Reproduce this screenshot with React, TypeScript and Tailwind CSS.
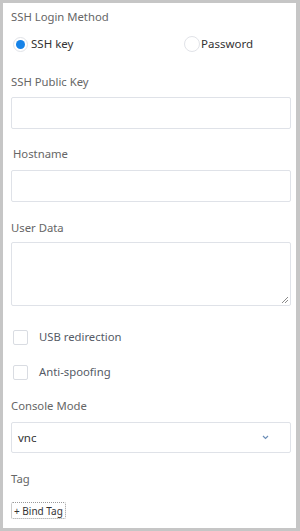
import React from "react";

const font = { fontFamily: '"Noto Sans", "Open Sans", sans-serif' };

function Label({ children, className = "" }: { children: React.ReactNode; className?: string }) {
  return (
    <div className={`flex h-[16px] items-center whitespace-nowrap text-[11.3px] leading-[16px] text-[#666666] ${className}`}>
      {children}
    </div>
  );
}

function Checkbox({ label, className = "" }: { label: string; className?: string }) {
  return (
    <div className={`flex h-[16px] items-center ${className}`}>
      <div className="ml-[2px] h-[15px] w-[15px] shrink-0 rounded-[2px] border border-[#d9dce2] bg-white" />
      <span className="ml-[11px] whitespace-nowrap text-[11.3px] leading-[16px] text-[#555b66]">{label}</span>
    </div>
  );
}

export default function App() {
  return (
    <div className="h-[531px] w-[300px] bg-[#c6c6c6] pl-[3px] pt-[3px]" style={font}>
      <div className="flex h-[525px] w-[293px] flex-col bg-white pl-[8px] pr-[5px] pt-[6px]">
        <Label>SSH Login Method</Label>
        <div className="mt-[11px] flex h-[16px] items-center">
          <div className="flex w-[173px] shrink-0 items-center">
            <div className="ml-[2px] flex h-[15px] w-[15px] shrink-0 items-center justify-center rounded-full border border-[#e1e3e8] bg-white">
              <div className="h-[9px] w-[9px] rounded-full bg-[#1683e8]" />
            </div>
            <span className="ml-[3px] whitespace-nowrap text-[11.5px] leading-[16px] text-[#333333]">SSH key</span>
          </div>
          <div className="h-[16px] w-[16px] shrink-0 rounded-full border border-[#e1e3e8] bg-white" />
          <span className="ml-[1px] whitespace-nowrap text-[11.5px] leading-[16px] text-[#333333]">Password</span>
        </div>
        <Label className="mt-[22px]">SSH Public Key</Label>
        <div className="mt-[7px] h-[32px] w-[280px] rounded-[2px] border border-[#dfe2e8] bg-white" />
        <Label className="mt-[17px] pl-[2px] text-[#3a3a3a]">Hostname</Label>
        <div className="mt-[8px] h-[32px] w-[280px] rounded-[2px] border border-[#dfe2e8] bg-white" />
        <Label className="mt-[18px]">User Data</Label>
        <div className="relative mt-[6px] h-[64px] w-[280px] rounded-[2px] border border-[#dfe2e8] bg-white">
          <svg className="absolute bottom-[2px] right-[2px]" width="7" height="7" viewBox="0 0 7 7">
            <path d="M1 7 L7 1 M4 7 L7 4" stroke="#8a8a8a" strokeWidth="1" />
          </svg>
        </div>
        <Checkbox label="USB redirection" className="mt-[23px]" />
        <Checkbox label="Anti-spoofing" className="mt-[19px]" />
        <Label className="mt-[18px]">Console Mode</Label>
        <div className="mt-[8px] flex h-[31px] w-[280px] items-center justify-between rounded-[2px] border border-[#dfe2e8] bg-white pl-[6px] pr-[21px]">
          <span className="text-[11.5px] leading-[16px] text-[#333333]">vnc</span>
          <svg width="7" height="5" viewBox="0 0 7 5">
            <path d="M1 1 L3.5 3.5 L6 1" stroke="#6d8fb8" strokeWidth="1.2" fill="none" />
          </svg>
        </div>
        <Label className="mt-[18px]">Tag</Label>
        <div className="mt-[15px] flex">
          <div className="flex h-[17px] items-center whitespace-nowrap rounded-[2px] border border-dotted border-[#9a9a9a] px-[2px] text-[10px] leading-[14px] text-[#333333]">
            + Bind Tag
          </div>
        </div>
      </div>
    </div>
  );
}
